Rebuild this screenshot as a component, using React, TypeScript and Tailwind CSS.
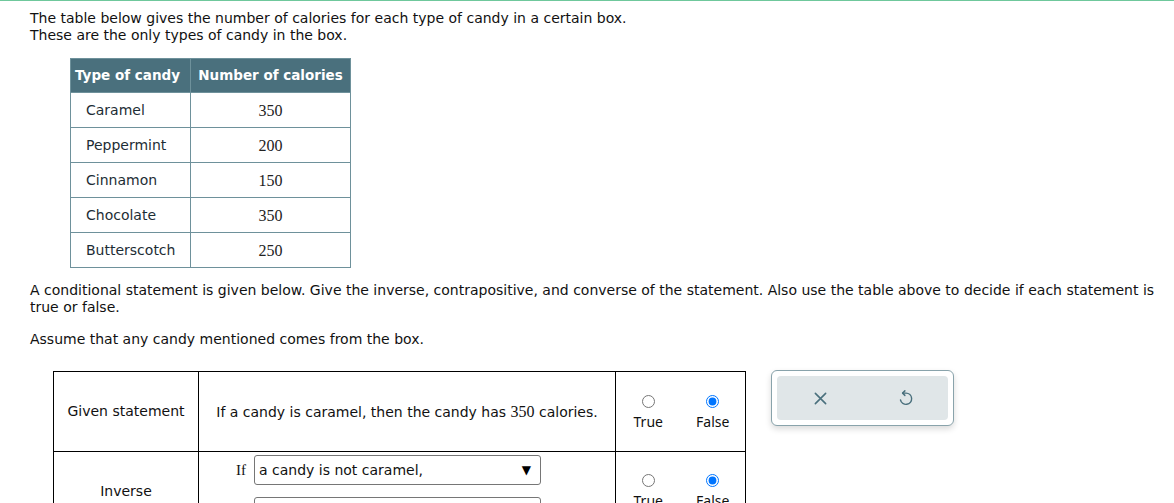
const candies: { name: string; calories: number }[] = [
  { name: 'Caramel', calories: 350 },
  { name: 'Peppermint', calories: 200 },
  { name: 'Cinnamon', calories: 150 },
  { name: 'Chocolate', calories: 350 },
  { name: 'Butterscotch', calories: 250 },
];

const body = "font-['DejaVu_Sans',Verdana,sans-serif]";
const serif = "font-['Liberation_Serif',serif]";

function Radios({ name, value }: { name: string; value: 'true' | 'false' }) {
  return (
    <div className="grid grid-cols-2 font-['Noto_Sans',sans-serif] text-[14px] leading-[18px] text-[#111]">
      {(['true', 'false'] as const).map((v) => (
        <label key={v} className="flex flex-col items-center gap-[5px]">
          <input
            type="radio"
            name={name}
            defaultChecked={v === value}
            className="m-0 h-[13px] w-[13px] accent-[#0075ff]"
          />
          <span>{v === 'true' ? 'True' : 'False'}</span>
        </label>
      ))}
    </div>
  );
}

function Select({ text }: { text: string }) {
  return (
    <div className="flex h-[30px] w-[287px] items-center justify-between rounded-[3px] border border-[#767676] bg-white pl-[4px] pr-[9px] text-[14px] text-[#111]">
      <span>{text}</span>
      <span className="text-[12px] leading-none text-black">▼</span>
    </div>
  );
}

function UndoIcon() {
  return (
    <svg width="18" height="18" viewBox="0 0 24 24" fill="none" stroke="currentColor" strokeWidth="1.9" strokeLinecap="round" strokeLinejoin="round">
      <path d="M10.5 2.5 7.5 5.5 10.5 8.5" />
      <path d="M7.5 5.5H12a7.5 7.5 0 1 1-7.3 9.2" />
    </svg>
  );
}

function CloseIcon() {
  return (
    <svg width="19" height="19" viewBox="0 0 24 24" fill="none" stroke="currentColor" strokeWidth="2" strokeLinecap="round">
      <path d="M5.5 5.5 18.5 18.5M18.5 5.5 5.5 18.5" />
    </svg>
  );
}

export default function App() {
  return (
    <div className={`${body} min-h-screen border-t border-[#6fc89c] bg-white text-[14px] leading-[17px] text-[#111]`}>
      <div className="pl-[30px] pr-[12px] pt-[9px]">
        <p>The table below gives the number of calories for each type of candy in a certain box.</p>
        <p>These are the only types of candy in the box.</p>

        <table className="ml-[40px] mt-[14px] border-collapse text-[#1d2d35]">
          <thead>
            <tr className="bg-[#4a707d] text-[13.5px] text-white">
              <th className="h-[34px] w-[120px] whitespace-nowrap border border-[#6e919b] px-[4px] text-left font-bold">Type of candy</th>
              <th className="h-[34px] w-[160px] whitespace-nowrap border border-[#6e919b] px-[4px] font-bold">Number of calories</th>
            </tr>
          </thead>
          <tbody>
            {candies.map((c) => (
              <tr key={c.name}>
                <td className="h-[35px] border border-[#6e919b] pl-[15px]">{c.name}</td>
                <td className={`${serif} h-[35px] border border-[#6e919b] text-center text-[16px] text-[#222]`}>
                  {c.calories}
                </td>
              </tr>
            ))}
          </tbody>
        </table>

        <p className="mt-[14px]">
          A conditional statement is given below. Give the inverse, contrapositive, and converse of the statement. Also use the table above to decide if each statement is true or false.
        </p>
        <p className="mt-[15px]">Assume that any candy mentioned comes from the box.</p>

        <div className="ml-[23px] mt-[23px] flex items-start">
          <table className="border-collapse">
            <tbody>
              <tr>
                <td className="h-[80px] w-[145px] border border-black text-center">Given statement</td>
                <td className="w-[417px] border border-black text-center">
                  If a candy is caramel, then the candy has <span className={`${serif} text-[16px]`}>350</span> calories.
                </td>
                <td className="w-[130px] border border-black pt-[2px]">
                  <Radios name="given" value="false" />
                </td>
              </tr>
              <tr>
                <td className="border border-black text-center">Inverse</td>
                <td className="border border-black align-top">
                  <div className="flex flex-col items-start gap-[12px] pb-[4px] pl-[37px] pt-[3px]">
                    <div className="flex items-center gap-[8px]">
                      <span className={`${serif} text-[15px]`}>If</span>
                      <Select text="a candy is not caramel," />
                    </div>
                    <div className="ml-[18px]">
                      <Select text="" />
                    </div>
                  </div>
                </td>
                <td className="border border-black align-top pt-[22px]">
                  <Radios name="inverse" value="false" />
                </td>
              </tr>
            </tbody>
          </table>

          <div className="ml-[25px] mt-[-1px] rounded-[6px] border border-[#89a3ab] bg-white p-[5px] shadow-[0_3px_6px_rgba(0,0,0,0.15)]">
            <div className="flex h-[44px] w-[171px] items-center justify-around rounded-[4px] bg-[#e0e6e8] text-[#4a707d]">
              <CloseIcon />
              <UndoIcon />
            </div>
          </div>
        </div>
      </div>
    </div>
  );
}
